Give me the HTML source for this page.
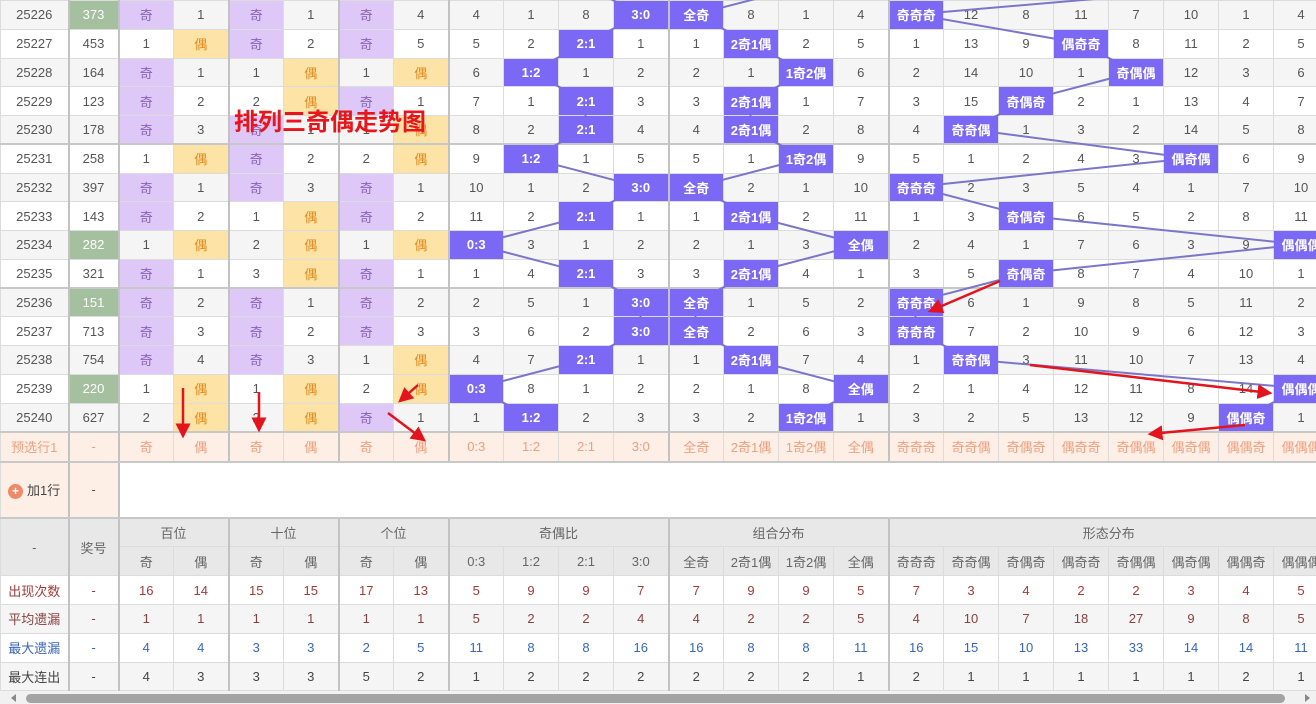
<!DOCTYPE html>
<html><head><meta charset="utf-8">
<style>
*{box-sizing:border-box;margin:0;padding:0}
body{width:1316px;height:704px;overflow:hidden;background:#fff;font-family:"Liberation Sans","Noto Sans CJK SC",sans-serif;font-size:13px;color:#555}
#wrap{position:relative;width:1316px;height:691px;overflow:hidden}
table{border-collapse:collapse;table-layout:fixed;width:1328px;position:relative}
td{border:1px solid #dcdcdc;text-align:center;vertical-align:middle;padding:0;white-space:nowrap;overflow:hidden}
.d tr{height:28.75px}
.d tr.a{background:#f5f5f5}
.d tr.w{background:#fff}
.d td:nth-child(2),.d td:nth-child(3),.d td:nth-child(5),.d td:nth-child(7),.d td:nth-child(9),.d td:nth-child(13),.d td:nth-child(17){border-left:2px solid #c2c2c2}
.d tr.s td{border-top:2px solid #c8c8c8}
td.g{background:#a4c09e;color:#fff}
td.p{background:#dec8f8;color:#8a62b4}
td.y{background:#fde3a6;color:#e58a1c}
td.b{background:#7b68f5;color:#fff;font-weight:bold;position:relative;z-index:2}
tr.pre{height:30px;background:#fdeee6;color:#f0a07e}
tr.pre td{border-top:2px solid #c8c8c8;border-bottom:2px solid #c8c8c8}
tr.add{height:56px}
tr.add td{border-bottom:2px solid #c8c8c8}
tr.h{height:29px;background:#e8e8e8;color:#666}
tr.h td.L{border-left:2px solid #c2c2c2}
.c1{color:#a33a3a}.c2{color:#8b4040}.c3{color:#3a66b8}.c4{color:#444}
svg.ov{position:absolute;left:0;top:0;z-index:1;pointer-events:none}
svg.ar{position:absolute;left:0;top:0;z-index:4;pointer-events:none}
.title{position:absolute;left:234px;top:102px;font-size:24px;font-weight:bold;color:#e8151b;z-index:3;font-family:"Liberation Sans","Noto Sans CJK SC",sans-serif}
.plus{display:inline-block;width:15px;height:15px;border-radius:50%;background:#f0896a;color:#fff;font-size:12px;line-height:15px;text-align:center;vertical-align:middle;margin-right:4px;font-weight:bold}
#sb{position:absolute;left:0;top:691px;width:1316px;height:13px;background:#f1f1f1}
#sb .t{position:absolute;left:26px;top:3px;width:1259px;height:9px;border-radius:5px;background:#a3a3a3}
</style></head><body>
<div id="wrap">
<table>
<colgroup><col style="width:68px"><col style="width:50px"><col span="22" style="width:55px"></colgroup>
<tbody class="d">
<tr class="a"><td>25226</td><td class="g">373</td><td class="p">奇</td><td>1</td><td class="p">奇</td><td>1</td><td class="p">奇</td><td>4</td><td>4</td><td>1</td><td>8</td><td class="b">3:0</td><td class="b">全奇</td><td>8</td><td>1</td><td>4</td><td class="b">奇奇奇</td><td>12</td><td>8</td><td>11</td><td>7</td><td>10</td><td>1</td><td>4</td></tr>
<tr class="w"><td>25227</td><td>453</td><td>1</td><td class="y">偶</td><td class="p">奇</td><td>2</td><td class="p">奇</td><td>5</td><td>5</td><td>2</td><td class="b">2:1</td><td>1</td><td>1</td><td class="b">2奇1偶</td><td>2</td><td>5</td><td>1</td><td>13</td><td>9</td><td class="b">偶奇奇</td><td>8</td><td>11</td><td>2</td><td>5</td></tr>
<tr class="a"><td>25228</td><td>164</td><td class="p">奇</td><td>1</td><td>1</td><td class="y">偶</td><td>1</td><td class="y">偶</td><td>6</td><td class="b">1:2</td><td>1</td><td>2</td><td>2</td><td>1</td><td class="b">1奇2偶</td><td>6</td><td>2</td><td>14</td><td>10</td><td>1</td><td class="b">奇偶偶</td><td>12</td><td>3</td><td>6</td></tr>
<tr class="w"><td>25229</td><td>123</td><td class="p">奇</td><td>2</td><td>2</td><td class="y">偶</td><td class="p">奇</td><td>1</td><td>7</td><td>1</td><td class="b">2:1</td><td>3</td><td>3</td><td class="b">2奇1偶</td><td>1</td><td>7</td><td>3</td><td>15</td><td class="b">奇偶奇</td><td>2</td><td>1</td><td>13</td><td>4</td><td>7</td></tr>
<tr class="a"><td>25230</td><td>178</td><td class="p">奇</td><td>3</td><td class="p">奇</td><td>1</td><td>1</td><td class="y">偶</td><td>8</td><td>2</td><td class="b">2:1</td><td>4</td><td>4</td><td class="b">2奇1偶</td><td>2</td><td>8</td><td>4</td><td class="b">奇奇偶</td><td>1</td><td>3</td><td>2</td><td>14</td><td>5</td><td>8</td></tr>
<tr class="w s"><td>25231</td><td>258</td><td>1</td><td class="y">偶</td><td class="p">奇</td><td>2</td><td>2</td><td class="y">偶</td><td>9</td><td class="b">1:2</td><td>1</td><td>5</td><td>5</td><td>1</td><td class="b">1奇2偶</td><td>9</td><td>5</td><td>1</td><td>2</td><td>4</td><td>3</td><td class="b">偶奇偶</td><td>6</td><td>9</td></tr>
<tr class="a"><td>25232</td><td>397</td><td class="p">奇</td><td>1</td><td class="p">奇</td><td>3</td><td class="p">奇</td><td>1</td><td>10</td><td>1</td><td>2</td><td class="b">3:0</td><td class="b">全奇</td><td>2</td><td>1</td><td>10</td><td class="b">奇奇奇</td><td>2</td><td>3</td><td>5</td><td>4</td><td>1</td><td>7</td><td>10</td></tr>
<tr class="w"><td>25233</td><td>143</td><td class="p">奇</td><td>2</td><td>1</td><td class="y">偶</td><td class="p">奇</td><td>2</td><td>11</td><td>2</td><td class="b">2:1</td><td>1</td><td>1</td><td class="b">2奇1偶</td><td>2</td><td>11</td><td>1</td><td>3</td><td class="b">奇偶奇</td><td>6</td><td>5</td><td>2</td><td>8</td><td>11</td></tr>
<tr class="a"><td>25234</td><td class="g">282</td><td>1</td><td class="y">偶</td><td>2</td><td class="y">偶</td><td>1</td><td class="y">偶</td><td class="b">0:3</td><td>3</td><td>1</td><td>2</td><td>2</td><td>1</td><td>3</td><td class="b">全偶</td><td>2</td><td>4</td><td>1</td><td>7</td><td>6</td><td>3</td><td>9</td><td class="b">偶偶偶</td></tr>
<tr class="w"><td>25235</td><td>321</td><td class="p">奇</td><td>1</td><td>3</td><td class="y">偶</td><td class="p">奇</td><td>1</td><td>1</td><td>4</td><td class="b">2:1</td><td>3</td><td>3</td><td class="b">2奇1偶</td><td>4</td><td>1</td><td>3</td><td>5</td><td class="b">奇偶奇</td><td>8</td><td>7</td><td>4</td><td>10</td><td>1</td></tr>
<tr class="a s"><td>25236</td><td class="g">151</td><td class="p">奇</td><td>2</td><td class="p">奇</td><td>1</td><td class="p">奇</td><td>2</td><td>2</td><td>5</td><td>1</td><td class="b">3:0</td><td class="b">全奇</td><td>1</td><td>5</td><td>2</td><td class="b">奇奇奇</td><td>6</td><td>1</td><td>9</td><td>8</td><td>5</td><td>11</td><td>2</td></tr>
<tr class="w"><td>25237</td><td>713</td><td class="p">奇</td><td>3</td><td class="p">奇</td><td>2</td><td class="p">奇</td><td>3</td><td>3</td><td>6</td><td>2</td><td class="b">3:0</td><td class="b">全奇</td><td>2</td><td>6</td><td>3</td><td class="b">奇奇奇</td><td>7</td><td>2</td><td>10</td><td>9</td><td>6</td><td>12</td><td>3</td></tr>
<tr class="a"><td>25238</td><td>754</td><td class="p">奇</td><td>4</td><td class="p">奇</td><td>3</td><td>1</td><td class="y">偶</td><td>4</td><td>7</td><td class="b">2:1</td><td>1</td><td>1</td><td class="b">2奇1偶</td><td>7</td><td>4</td><td>1</td><td class="b">奇奇偶</td><td>3</td><td>11</td><td>10</td><td>7</td><td>13</td><td>4</td></tr>
<tr class="w"><td>25239</td><td class="g">220</td><td>1</td><td class="y">偶</td><td>1</td><td class="y">偶</td><td>2</td><td class="y">偶</td><td class="b">0:3</td><td>8</td><td>1</td><td>2</td><td>2</td><td>1</td><td>8</td><td class="b">全偶</td><td>2</td><td>1</td><td>4</td><td>12</td><td>11</td><td>8</td><td>14</td><td class="b">偶偶偶</td></tr>
<tr class="a"><td>25240</td><td>627</td><td>2</td><td class="y">偶</td><td>2</td><td class="y">偶</td><td class="p">奇</td><td>1</td><td>1</td><td class="b">1:2</td><td>2</td><td>3</td><td>3</td><td>2</td><td class="b">1奇2偶</td><td>1</td><td>3</td><td>2</td><td>5</td><td>13</td><td>12</td><td>9</td><td class="b">偶偶奇</td><td>1</td></tr>
<tr class="pre"><td>预选行1</td><td>-</td><td>奇</td><td>偶</td><td>奇</td><td>偶</td><td>奇</td><td>偶</td><td>0:3</td><td>1:2</td><td>2:1</td><td>3:0</td><td>全奇</td><td>2奇1偶</td><td>1奇2偶</td><td>全偶</td><td>奇奇奇</td><td>奇奇偶</td><td>奇偶奇</td><td>偶奇奇</td><td>奇偶偶</td><td>偶奇偶</td><td>偶偶奇</td><td>偶偶偶</td></tr>
<tr class="add"><td style="background:#fdeee6;color:#444;text-align:left;padding-left:7px"><span class="plus">+</span>加1行</td><td style="background:#fdeee6">-</td><td colspan="22" style="background:#fff;border-left:2px solid #c2c2c2"></td></tr>
</tbody>
<tbody>
<tr class="h"><td rowspan="2">-</td><td rowspan="2" class="L">奖号</td><td colspan="2" class="L">百位</td><td colspan="2" class="L">十位</td><td colspan="2" class="L">个位</td><td colspan="4" class="L">奇偶比</td><td colspan="4" class="L">组合分布</td><td colspan="8" class="L">形态分布</td></tr>
<tr class="h"><td class="L">奇</td><td>偶</td><td class="L">奇</td><td>偶</td><td class="L">奇</td><td>偶</td><td class="L">0:3</td><td>1:2</td><td>2:1</td><td>3:0</td><td class="L">全奇</td><td>2奇1偶</td><td>1奇2偶</td><td>全偶</td><td class="L">奇奇奇</td><td>奇奇偶</td><td>奇偶奇</td><td>偶奇奇</td><td>奇偶偶</td><td>偶奇偶</td><td>偶偶奇</td><td>偶偶偶</td></tr>
</tbody>
<tbody class="d">
<tr class="w c1"><td>出现次数</td><td>-</td><td>16</td><td>14</td><td>15</td><td>15</td><td>17</td><td>13</td><td>5</td><td>9</td><td>9</td><td>7</td><td>7</td><td>9</td><td>9</td><td>5</td><td>7</td><td>3</td><td>4</td><td>2</td><td>2</td><td>3</td><td>4</td><td>5</td></tr>
<tr class="a c2"><td>平均遗漏</td><td>-</td><td>1</td><td>1</td><td>1</td><td>1</td><td>1</td><td>1</td><td>5</td><td>2</td><td>2</td><td>4</td><td>4</td><td>2</td><td>2</td><td>5</td><td>4</td><td>10</td><td>7</td><td>18</td><td>27</td><td>9</td><td>8</td><td>5</td></tr>
<tr class="w c3"><td>最大遗漏</td><td>-</td><td>4</td><td>4</td><td>3</td><td>3</td><td>2</td><td>5</td><td>11</td><td>8</td><td>8</td><td>16</td><td>16</td><td>8</td><td>8</td><td>11</td><td>16</td><td>15</td><td>10</td><td>13</td><td>33</td><td>14</td><td>14</td><td>11</td></tr>
<tr class="a c4"><td>最大连出</td><td>-</td><td>4</td><td>3</td><td>3</td><td>3</td><td>5</td><td>2</td><td>1</td><td>2</td><td>2</td><td>2</td><td>2</td><td>2</td><td>2</td><td>1</td><td>2</td><td>1</td><td>1</td><td>1</td><td>1</td><td>1</td><td>2</td><td>1</td></tr>
</tbody>
</table>
<svg class="ov" width="1316" height="440" viewBox="0 0 1316 440">
<g fill="none" stroke="#7b76c8" stroke-width="2">
<polyline points="585.5,-14 640.5,14.4 585.5,43.2 530.5,71.9 585.5,100.7 585.5,129.4 530.5,158.2 640.5,186.9 585.5,215.7 475.5,244.4 585.5,273.2 640.5,301.9 640.5,330.7 585.5,359.4 475.5,388.2 530.5,416.9"/>
<polyline points="805.5,-14 695.5,14.4 750.5,43.2 805.5,71.9 750.5,100.7 750.5,129.4 805.5,158.2 695.5,186.9 750.5,215.7 860.5,244.4 750.5,273.2 695.5,301.9 695.5,330.7 750.5,359.4 860.5,388.2 805.5,416.9"/>
<polyline points="1245.5,-14 915.5,14.4 1080.5,43.2 1135.5,71.9 1025.5,100.7 970.5,129.4 1190.5,158.2 915.5,186.9 1025.5,215.7 1300.5,244.4 1025.5,273.2 915.5,301.9 915.5,330.7 970.5,359.4 1300.5,388.2 1245.5,416.9"/>
</g></svg>
<div class="title">排列三奇偶走势图</div>
<svg class="ar" width="1316" height="460" viewBox="0 0 1316 460">
<defs><marker id="m" markerWidth="6" markerHeight="6" refX="5" refY="3" orient="auto" markerUnits="strokeWidth"><path d="M0,0 L6,3 L0,6 Z" fill="#e3141c"/></marker></defs>
<g stroke="#e3141c" stroke-width="2.5" fill="none" marker-end="url(#m)">
<line x1="183" y1="388" x2="183" y2="436"/>
<line x1="259" y1="392" x2="259" y2="430"/>
<line x1="418" y1="385" x2="400" y2="401"/>
<line x1="388" y1="413" x2="424" y2="440"/>
<line x1="1000" y1="281" x2="930" y2="311"/>
<line x1="1030" y1="365" x2="1270" y2="393"/>
<line x1="1245" y1="425" x2="1150" y2="434"/>
</g></svg>
</div>
<div id="sb"><div class="t"></div>
<div style="position:absolute;left:11px;top:3px;width:0;height:0;border-top:4px solid transparent;border-bottom:4px solid transparent;border-right:5px solid #888"></div>
<div style="position:absolute;left:1305px;top:3px;width:0;height:0;border-top:4px solid transparent;border-bottom:4px solid transparent;border-left:5px solid #888"></div>
</div>
</body></html>
